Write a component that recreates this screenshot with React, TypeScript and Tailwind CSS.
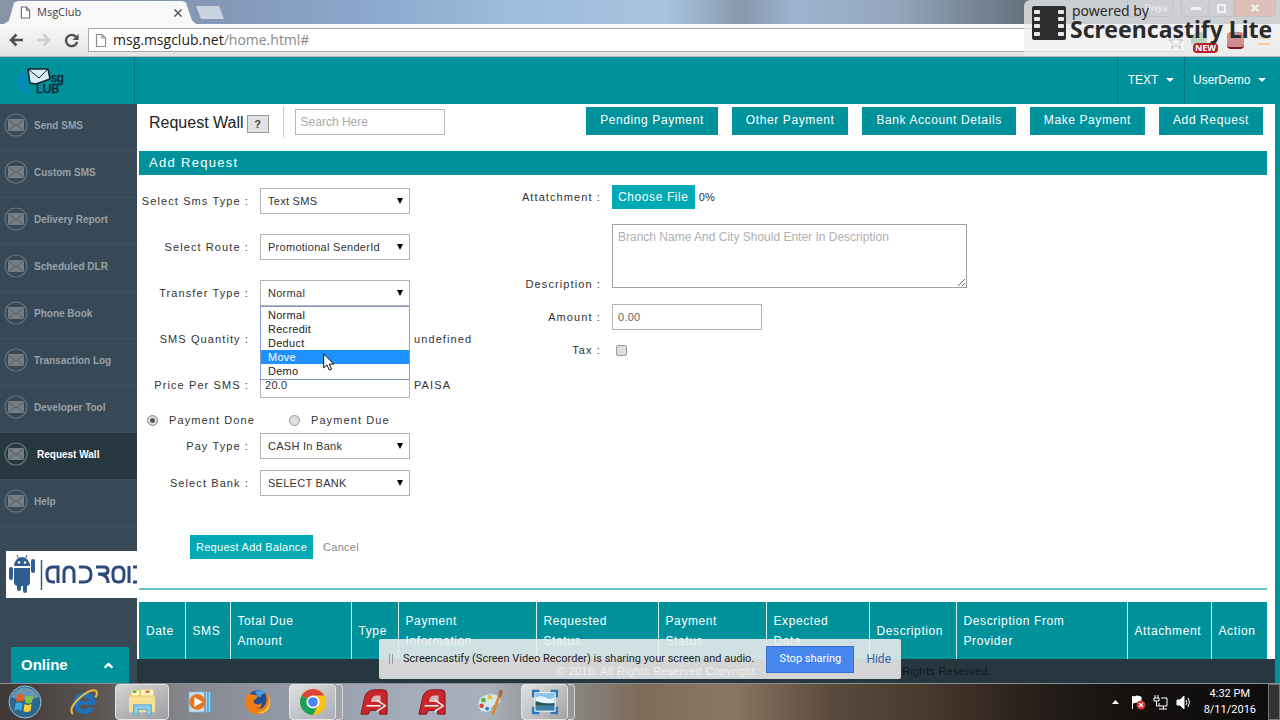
import { useState } from "react";
import type { ReactNode } from "react";
import { ChevronUp } from "lucide-react";

const MENU = [
  "Send SMS",
  "Custom SMS",
  "Delivery Report",
  "Scheduled DLR",
  "Phone Book",
  "Transaction Log",
  "Developer Tool",
  "Request Wall",
  "Help",
];

const ACTIONS = ["Pending Payment", "Other Payment", "Bank Account Details", "Make Payment", "Add Request"];

const TRANSFER_TYPES = ["Normal", "Recredit", "Deduct", "Move", "Demo"];

const COLUMNS = [
  { label: "Date", width: "w-[46px]" },
  { label: "SMS", width: "w-[45px]" },
  { label: "Total Due\nAmount", width: "w-[121px]" },
  { label: "Type", width: "w-[47px]" },
  { label: "Payment\nInformation", width: "w-[138px]" },
  { label: "Requested\nStatus", width: "w-[122px]" },
  { label: "Payment\nStatus", width: "w-[108px]" },
  { label: "Expected\nDate", width: "w-[103px]" },
  { label: "Description", width: "w-[87px]" },
  { label: "Description From\nProvider", width: "w-[171px]" },
  { label: "Attachment", width: "w-[84px]" },
  { label: "Action", width: "" },
];

function PageIcon({ className }: { className: string }) {
  return (
    <svg viewBox="0 0 12 14" className={className} fill="#fff" stroke="currentColor" strokeWidth="1.2">
      <path d="M1.5 1h5.5l3.5 3.5V13h-9z" />
      <path d="M7 1v3.5h3.5" fill="none" />
    </svg>
  );
}

function EnvelopeIcon() {
  return (
    <svg viewBox="0 0 24 24" className="h-6 w-6 shrink-0">
      <circle cx="12" cy="12" r="11" fill="none" stroke="#65717a" strokeWidth="1.2" />
      <rect x="4" y="6" width="16" height="12" rx="1" fill="#757e84" />
      <path d="M4.500 7l7.500 6 7.500-6M4.500 17.500l5.500-5M19.500 17.500l-5.500-5" fill="none" stroke="#4d5a64" strokeWidth="1" />
    </svg>
  );
}

function Logo() {
  return (
    <svg viewBox="0 0 52 32" className="h-8 w-[52px]">
      <path d="M12 4C4 7 0 15 3 21c2 5 7 7 15 8-7-4-10-8-9-14 0-4 1-8 3-11z" fill="#0b86d0" opacity=".6" />
      <path d="M12 4l20 0 2 10-14 5-6-1z" fill="#d9edf6" stroke="#16232b" strokeWidth="1.500" strokeLinejoin="round" />
      <path d="M12 4l11 9 9-9" fill="none" stroke="#16232b" strokeWidth="1" />
      <text x="35" y="17" fontFamily="Liberation Sans" fontSize="12" fill="#0d2730" stroke="#0d2730" strokeWidth=".5">sg</text>
      <text x="20" y="28" fontFamily="Liberation Sans" fontSize="12" fill="#0d2730" stroke="#0d2730" strokeWidth=".5">LUB</text>
    </svg>
  );
}

function TitleBar() {
  return (
    <div className="relative flex h-6 items-end bg-[linear-gradient(90deg,#8794a6_0%,#8499b8_18%,#8aa7cb_28%,#9dbbdc_40%,#a8c4e0_52%,#8898ad_58%,#9db3cf_62%,#93a6bc_70%,#65727e_80%,#707880_100%)] pl-1">
      <div className="flex h-[23px] w-48 items-center gap-[6px] bg-[#f8f8f9] pl-4 pr-3 [clip-path:polygon(0_100%,5px_85%,10px_8%,14px_0,178px_0,182px_8%,188px_85%,100%_100%)]">
        <PageIcon className="h-[13px] w-[11px] text-[#6c6c6c]" />
        <span className="flex-1 text-[11px] text-[#444]">MsgClub</span>
        <button aria-label="Close tab" className="mr-[2px]">
          <svg viewBox="0 0 8 8" className="h-2 w-2" stroke="#555" strokeWidth="1.500">
            <path d="M.5.5l7 7M7.500.5l-7 7" />
          </svg>
        </button>
      </div>
      <button
        aria-label="New tab"
        className="mb-[5px] h-[13px] w-7 bg-[#c9d3e0] [clip-path:polygon(0_0,82%_0,100%_100%,18%_100%)]"
      />
      <div className="ml-auto mr-1 flex h-[17px] self-start text-[9px] text-white">
        <button className="mr-2 w-[46px] rounded-b border border-t-0 border-[#444] pl-3">Divya</button>
        <button aria-label="Minimize" className="flex w-[29px] items-center justify-center rounded-bl border border-t-0 border-[#444]">
          <span className="h-[3px] w-[10px] bg-white" />
        </button>
        <button aria-label="Restore" className="flex w-[23px] items-center justify-center border-b border-[#444]">
          <span className="h-[9px] w-[9px] border-2 border-white" />
        </button>
        <button aria-label="Close" className="flex w-[43px] items-center justify-center rounded-br border border-t-0 border-[#444] bg-[#b03520]">
          <svg viewBox="0 0 8 8" className="h-2 w-2" stroke="#fff" strokeWidth="2">
            <path d="M.5.5l7 7M7.500.5l-7 7" />
          </svg>
        </button>
      </div>
    </div>
  );
}

function AddressBar() {
  return (
    <div className="flex h-[33px] items-center border-b border-[#b9b9bd] bg-linear-to-b from-[#fafafa] to-[#e4e3e6] pl-2">
      <button aria-label="Back" className="mr-3">
        <svg viewBox="0 0 16 14" className="h-[14px] w-4" fill="none" stroke="#505050" strokeWidth="2.500">
          <path d="M15 7H3M8.500 1.500L3 7l5.500 5.500" />
        </svg>
      </button>
      <button aria-label="Forward" className="mr-3">
        <svg viewBox="0 0 16 14" className="h-[14px] w-4" fill="none" stroke="#cfcfd1" strokeWidth="2.500">
          <path d="M1 7h12M7.500 1.500L13 7l-5.500 5.500" />
        </svg>
      </button>
      <button aria-label="Reload" className="mr-[9px]">
        <svg viewBox="0 0 16 16" className="h-[15px] w-[15px]">
          <path d="M12.800 4.200A6 6 0 1 0 14 9.500" fill="none" stroke="#505050" strokeWidth="2.500" />
          <path d="M15.500 1v6.500H9z" fill="#505050" />
        </svg>
      </button>
      <div className="mr-24 flex h-6 flex-1 items-center gap-[6px] border border-r-0 border-[#a9a9ad] bg-white pl-[6px]">
        <PageIcon className="h-[15px] w-3 shrink-0 text-[#8f8f8f]" />
        <span className="flex-1 text-sm leading-5 text-[#222]">
          msg.msgclub.net<span className="text-[#888]">/home.html#</span>
        </span>
        <svg viewBox="0 0 16 16" className="mt-1 h-4 w-4" fill="none" stroke="#444">
          <path d="M8 1l2 5h5l-4 3.500 1.500 5L8 11.500l-4.500 3 1.500-5L1 6h5z" />
        </svg>
      </div>
    </div>
  );
}

function Watermark() {
  return (
    <div className="absolute right-0 top-0 flex h-14 w-64 items-start gap-1 rounded-tl-md bg-[#eeeeee]/75 pl-2 pt-1 font-['Noto_Sans',sans-serif] text-[#2b2b2b]">
      <span className="absolute right-[73px] top-8 h-3 w-4 rounded-t-full bg-[#b5d3c2]" />
      <span className="absolute right-[62px] top-[43px] rounded-sm bg-[#b8202c] px-[2px] text-[9px] font-bold leading-[10px] text-white">
        NEW
      </span>
      <span className="absolute right-9 top-8 h-[17px] w-[17px] rounded-sm border-b-2 border-[#801018] bg-[#cf8c90]" />
      <span className="absolute right-[10px] top-[37px] h-2 w-3 border-y-2 border-[#ecd3b0]" />
      <svg viewBox="0 0 34 34" className="mt-[2px] h-[34px] w-[34px] shrink-0">
        <rect width="34" height="34" rx="2" fill="#2d2d2d" />
        {[4, 11, 18, 26].map((y) => (
          <g key={y} fill="#e8e8e8">
            <rect x="2" y={y} width="6" height="4" rx="1" />
            <rect x="26" y={y} width="6" height="4" rx="1" />
          </g>
        ))}
      </svg>
      <div className="relative whitespace-nowrap">
        <p className="pl-[2px] text-sm leading-[14px]">powered by</p>
        <p className="text-[23px] font-bold leading-[22px]">Screencastify Lite</p>
      </div>
    </div>
  );
}

function Caret() {
  return <span className="border-x-4 border-t-4 border-x-transparent border-t-white" />;
}

function AppHeader() {
  return (
    <header className="flex h-[47px] bg-[#00929b] text-xs text-white">
      <div className="w-[135px] border-r border-[#007880] pl-4 pt-2">
        <Logo />
      </div>
      <button className="ml-auto flex w-[67px] items-center justify-center gap-2 border-l border-[#007880] pb-[2px]">
        TEXT <Caret />
      </button>
      <button className="flex w-24 items-center gap-2 border-l border-[#007880] pb-[2px] pl-2">
        UserDemo <Caret />
      </button>
    </header>
  );
}

function Sidebar() {
  return (
    <aside className="flex w-[137px] shrink-0 flex-col overflow-hidden bg-[#374957]">
      <nav>
        {MENU.map((item) => (
          <a
            key={item}
            href="#"
            className={`flex h-[47px] items-center gap-[6px] border-b border-[#3f505e] pb-1 pl-1 text-[10px] font-bold ${
              item === "Request Wall" ? "bg-[#27373f] text-white" : "text-[#97a1a8]"
            }`}
          >
            <EnvelopeIcon />
            <span className={item === "Request Wall" ? "pl-[3px]" : ""}>{item}</span>
          </a>
        ))}
      </nav>
      <a href="#" aria-label="Android" className="ml-[6px] mt-6 block h-[47px] bg-white">
        <svg viewBox="0 0 131 47" className="h-[47px] w-[131px]">
          <g fill="#2f5f92">
            <path d="M8 15a8 9 0 0 1 16 0z" />
            <path d="M8 17h16v14q0 4-4 4h-8q-4 0-4-4z" />
            <rect x="3" y="16" width="4" height="13" rx="2" />
            <rect x="25" y="8" width="4" height="14" rx="2" />
            <rect x="11" y="33" width="4" height="7" rx="2" />
            <rect x="17" y="33" width="4" height="9" rx="2" />
            <path d="M11 4l2 5M21 4l-2 5" stroke="#2f5f92" strokeWidth="1" />
          </g>
          <circle cx="13" cy="11.5" r="1.2" fill="#fff" />
          <circle cx="19" cy="11.5" r="1.2" fill="#fff" />
          <path d="M35.500 9v30" stroke="#2a6280" strokeWidth="1.500" />
          <g fill="none" stroke="#2d4a78" strokeWidth="3">
            <path d="M52 32V16H47q-6 0-6 6v3q0 6 6 6h2" />
            <path d="M58 32V22q0-6 5-6t5 6v10" />
            <path d="M73 16h5q7 0 7 7v1q0 7-7 7h-5" />
            <path d="M90 16h8q4 0 4 3.500t-4 3.500h-6M92 23q10 0 10 9" />
            <path d="M112 16h1q5 0 5 6v3q0 6-5 6h-1q-5 0-5-6v-3q0-6 5-6z" />
            <path d="M123 15v17M127 16h8M127 31h8" />
          </g>
        </svg>
      </a>
      <button className="ml-[11px] mr-2 mt-auto flex h-9 items-center justify-between bg-[#00929b] pl-[10px] pr-[14px] text-[15px] font-bold text-white">
        Online
        <ChevronUp size={13} strokeWidth={4} />
      </button>
    </aside>
  );
}

function Select({ id, value }: { id: string; value: string }) {
  return (
    <div className="relative w-[150px]">
      <select
        id={id}
        className="block h-[26px] w-full appearance-none border border-[#b3b3b3] bg-white pl-[7px] text-[11px] tracking-wide text-[#333]"
      >
        <option>{value}</option>
      </select>
      <svg viewBox="0 0 6 6" className="pointer-events-none absolute right-[7px] top-[10px] h-[6px] w-[6px]">
        <path d="M0 0h6L3 6z" fill="#000" />
      </svg>
    </div>
  );
}

function Row({ id, label, children }: { id: string; label: string; children: ReactNode }) {
  return (
    <div className="flex h-[26px] items-center">
      <label htmlFor={id} className="w-[121px] shrink-0 whitespace-nowrap pr-[11px] text-right">
        {label} :
      </label>
      {children}
    </div>
  );
}

function TransferOptions({ value, onChange }: { value: string; onChange: (v: string) => void }) {
  return (
    <ul
      role="listbox"
      aria-label="Transfer Type"
      className="absolute left-0 top-[26px] z-10 w-[150px] border border-[#8a9bd0] bg-white py-px text-[11px] leading-[14px] tracking-wide text-[#222]"
    >
      {TRANSFER_TYPES.map((t) => (
        <li
          key={t}
          role="option"
          aria-selected={t === value}
          onClick={() => onChange(t)}
          className={`pl-[7px] ${t === "Move" ? "bg-[#1e90ff] text-white" : ""}`}
        >
          {t}
        </li>
      ))}
      <svg viewBox="0 0 12 18" className="absolute left-[62px] top-[46px] h-[18px] w-3">
        <path d="M.7.9v14l3.300-3 2.300 5.200 2.200-1-2.300-5h4.600z" fill="#fff" stroke="#111" />
      </svg>
    </ul>
  );
}

function PaymentRadio({ label, checked, onChange }: { label: string; checked: boolean; onChange: () => void }) {
  return (
    <label className="flex items-center gap-[11px]">
      <input
        type="radio"
        name="payment"
        checked={checked}
        onChange={onChange}
        className="h-[11px] w-[11px] appearance-none rounded-full border border-[#999] bg-[#dedede] checked:bg-[#555] checked:shadow-[inset_0_0_0_2px_#e8e8e8]"
      />
      {label}
    </label>
  );
}

function RequestForm() {
  const [transfer, setTransfer] = useState("Normal");
  const [payment, setPayment] = useState("done");

  return (
    <form className="flex border-b-2 border-[#5fc4c9] pb-[29px] text-[11px] tracking-widest text-[#333]">
      <div className="w-1/3 pt-[13px]">
        <div className="flex flex-col gap-5">
          <Row id="smsType" label="Select Sms Type">
            <Select id="smsType" value="Text SMS" />
          </Row>
          <Row id="route" label="Select Route">
            <Select id="route" value="Promotional SenderId" />
          </Row>
          <Row id="transfer" label="Transfer Type">
            <div className="relative">
              <Select id="transfer" value={transfer} />
              <TransferOptions value={transfer} onChange={setTransfer} />
            </div>
          </Row>
          <Row id="quantity" label="SMS Quantity">
            <input id="quantity" className="h-[26px] w-[150px] border border-[#b3b3b3] px-1" />
            <span className="pl-1">undefined</span>
          </Row>
          <Row id="price" label="Price Per SMS">
            <input
              id="price"
              defaultValue="20.0"
              className="h-[26px] w-[150px] border border-[#b3b3b3] px-1 tracking-wide"
            />
            <span className="pl-1">PAISA</span>
          </Row>
        </div>
        <div className="flex h-[35px] items-center gap-[34px] pl-2 pt-[10px]">
          <PaymentRadio label="Payment Done" checked={payment === "done"} onChange={() => setPayment("done")} />
          <PaymentRadio label="Payment Due" checked={payment === "due"} onChange={() => setPayment("due")} />
        </div>
        <div className="flex flex-col gap-[11px]">
          <Row id="payType" label="Pay Type">
            <Select id="payType" value="CASH In Bank" />
          </Row>
          <Row id="bank" label="Select Bank">
            <Select id="bank" value="SELECT BANK" />
          </Row>
        </div>
        <div className="mt-[39px] flex items-center gap-[10px] pl-[51px]">
          <button type="button" className="h-6 whitespace-nowrap bg-[#00a9b4] px-[6px] tracking-wide text-white">
            Request Add Balance
          </button>
          <button type="button" className="tracking-wide text-[#888]">Cancel</button>
        </div>
      </div>

      <div className="flex-1 pt-[10px]">
        <div className="flex h-6 items-center">
          <label htmlFor="attachment" className="w-[97px] pr-[11px] text-right">Attatchment :</label>
          <button type="button" id="attachment" className="h-6 bg-[#00a9b4] px-[6px] text-xs tracking-wider text-white">
            Choose File
          </button>
          <span className="pl-1 text-[11px] tracking-wide">0%</span>
        </div>
        <div className="mt-[15px] flex items-end">
          <label htmlFor="description" className="w-[97px] pr-[11px] text-right leading-2">Description :</label>
          <textarea
            id="description"
            placeholder="Branch Name And City Should Enter In Description"
            className="block h-16 w-[355px] border border-[#a0a0a0] px-[5px] py-1 text-xs tracking-normal placeholder:text-[#b0b0b0]"
          />
        </div>
        <div className="mt-4 flex h-[26px] items-center">
          <label htmlFor="amount" className="w-[97px] pr-[11px] text-right">Amount :</label>
          <input
            id="amount"
            defaultValue="0.00"
            className="h-[26px] w-[150px] border border-[#b3b3b3] px-[5px] tracking-wide text-[#666]"
          />
        </div>
        <div className="mt-[10px] flex h-5 items-center">
          <label htmlFor="tax" className="w-[97px] pr-[11px] text-right">Tax :</label>
          <input id="tax" type="checkbox" className="ml-1 h-[11px] w-[11px] appearance-none rounded-xs border border-[#999] bg-[#dedede]" />
        </div>
      </div>
    </form>
  );
}

function Main() {
  return (
    <main className="flex min-w-0 flex-1 flex-col border-r-5 border-[#00929b] bg-white">
      <div className="pl-[2px] pr-2">
        <div className="flex h-[47px] items-start pl-[10px] pr-1 pt-[3px]">
          <h1 className="mt-1 text-base leading-6 text-[#222]">Request Wall</h1>
          <button className="ml-[3px] mt-2 h-[18px] w-[22px] border border-[#999] bg-[#e2e2e2] text-[11px] font-bold leading-4 text-[#444]">
            ?
          </button>
          <div className="ml-[14px] h-[30px] border-l border-[#c8c8c8] pl-[11px] pt-[2px]">
            <input
              aria-label="Search"
              placeholder="Search Here"
              className="block h-[26px] w-[150px] border border-[#b8b8b8] px-[5px] text-xs placeholder:text-[#aaa]"
            />
          </div>
          <div className="ml-auto flex gap-[14px]">
            {ACTIONS.map((a) => (
              <button key={a} className="h-7 whitespace-nowrap bg-[#00929b] px-[14px] pb-[2px] text-xs tracking-wider text-white">
                {a}
              </button>
            ))}
          </div>
        </div>
        <h2 className="h-6 bg-[#00929b] pl-[10px] text-[13px] leading-6 tracking-widest text-white">Add Request</h2>
        <RequestForm />
        <table className="mt-3 w-full table-fixed border-collapse bg-[#00929b] text-left text-xs leading-5 tracking-wider text-white">
          <thead>
            <tr className="h-[57px]">
              {COLUMNS.map((c) => (
                <th
                  key={c.label}
                  className={`${c.width} whitespace-pre border-r border-[#d5f0f1] pl-[7px] font-normal last:border-r-0`}
                >
                  {c.label}
                </th>
              ))}
            </tr>
          </thead>
        </table>
      </div>
      <footer className="flex flex-1 items-center justify-between bg-[#27373f] pl-[420px] pr-[284px] text-[11px]">
        <span className="tracking-wide text-white">© 2016. All Rights Reserved Copyright. -</span>
        <span className="tracking-wide text-[#0e181d]">Rights Reserved.</span>
      </footer>
    </main>
  );
}

function SharingBar() {
  return (
    <div className="absolute bottom-[41px] left-1/2 z-20 flex h-10 w-[522px] -translate-x-1/2 items-center rounded-xs bg-[#ececec]/88 pl-[10px] font-['Roboto',sans-serif] text-[11px] text-[#222]">
      <span className="mr-[10px] h-[10px] w-1 border-x border-[#999]" />
      <span className="flex-1 whitespace-nowrap">
        Screencastify (Screen Video Recorder) is sharing your screen and audio.
      </span>
      <button className="h-[27px] w-[88px] border border-[#3a6fd0] bg-[#4787ed] text-white">Stop sharing</button>
      <a href="#" className="pl-3 pr-[10px] text-xs text-[#3b5fa8]">Hide</a>
    </div>
  );
}

function TaskButton({ label, active, stacked, children }: { label: string; active?: boolean; stacked?: boolean; children: ReactNode }) {
  return (
    <button aria-label={label} className="flex h-full w-[58px] justify-center px-[2px]">
      <span
        className={`flex h-full flex-1 items-center justify-center rounded-sm border ${
          active ? "border-[#e4e4e4] bg-linear-to-br from-[#f2f2f2]/80 to-[#b5b5b5]/60" : "border-transparent"
        }`}
      >
        <svg viewBox="0 0 30 30" className="h-7 w-7">{children}</svg>
      </span>
      {stacked && <span className="h-full w-[7px] rounded-r-sm border border-l-0 border-[#d5d5d5] bg-[#aaa]/50" />}
    </button>
  );
}

function RedA() {
  return (
    <>
      <path d="M1 28L5 10q2-8 11-8h9q4 0 4 4v22h-8v-4h-10l-2 4z" fill="#c9252b" stroke="#7f1418" />
      <path d="M12 13q1-5 6-5h4v7h-10z" fill="#d8b4b6" />
      <path d="M7 19h15M18 13l9 6-9 6" fill="none" stroke="#fff" strokeWidth="1.500" />
    </>
  );
}

function Taskbar() {
  return (
    <div className="flex h-[37px] items-center border-t border-[#8b8f92] bg-[linear-gradient(90deg,#3d3836_0%,#5c5654_8%,#85868c_14%,#9298a6_22%,#a4acba_32%,#a9b0bb_38%,#8a8a88_44%,#7d6b58_50%,#8a7763_57%,#5a4a3d_65%,#4a3a2e_72%,#2a211c_80%,#14110f_88%,#0e0d0d_100%)]">
      <button aria-label="Start" className="w-[55px] pl-2">
        <svg viewBox="0 0 34 34" className="h-[34px] w-[34px]">
          <circle cx="17" cy="17" r="16" fill="#2d678f" stroke="#9fc0d2" />
          <path d="M3 12a15 15 0 0 1 28 0q-14 6-28 0z" fill="#8db7cf" opacity=".6" />
          <path d="M9 10q4-2 7 0l-1 7q-4-2-7 0z" fill="#ea5b23" />
          <path d="M18 10.500q3 2 7 0l-1 7q-4 2-7 0z" fill="#86c440" />
          <path d="M7.500 18.500q4-2 7 0l-1 7q-4-2-7 0z" fill="#3ba7e4" />
          <path d="M16.500 19q3 2 7 0l-1 7q-4 2-7 0z" fill="#fcd034" />
        </svg>
      </button>
      <TaskButton label="Internet Explorer">
        <path fillRule="evenodd" d="M21 18H10q1 5 6 5 3 0 4-2h6q-3 7-10 7-12-1-12-12T16 5q11 0 11 13zM10.500 14h10q-1-4-5-4t-5 4z" fill="#1f72c0" />
        <path d="M3 28q-5-6 7-17T28 3q2 3-1 7" fill="none" stroke="#e9b93a" strokeWidth="2.200" />
      </TaskButton>
      <TaskButton label="Explorer" active>
        <path d="M2 6l8-4h18v22H2z" fill="#e6c862" />
        <path d="M4 3h8v5H4zM14 2h13v6H14z" fill="#fff4b8" />
        <path d="M5 3h4v2H5z" fill="#39a93f" />
        <path d="M19 3h4v2h-4z" fill="#d04a36" />
        <path d="M1 9h28v17H1z" fill="#f5e193" />
        <path d="M6 29V18h19v11h-5v-6h-9v6z" fill="#8fcbe6" stroke="#5aa5cc" />
      </TaskButton>
      <TaskButton label="Media Player">
        <path d="M8 4h19v22H8z" fill="#58a8d2" />
        <path d="M22 4v22M25 4v22" stroke="#b9dcec" />
        <path d="M3 4h17v22H3z" fill="#c5dfec" stroke="#6f9bb5" />
        <circle cx="12" cy="15" r="8.500" fill="#e8761e" />
        <path d="M9 10l9 5-9 5z" fill="#fff" />
      </TaskButton>
      <TaskButton label="Firefox">
        <circle cx="15" cy="15" r="12.500" fill="#254f93" />
        <path d="M12 4q6-3 12 1-6 1-6 5-5-1-6-6z" fill="#4b9bd8" />
        <path d="M4 5q2 2 5 2 4 0 6 2l-4 4q-2 1 1 4 3 2 7-1 0 6-6 6 9 2 11-8 1-5-2-10 6 4 6 12-1 12-13 12T1.500 17Q1 10 4 5z" fill="#ee7d16" />
        <path d="M25 6q3 5 1 12-3 8-12 8 8 4 13-5 3-9-2-15z" fill="#f9c638" />
      </TaskButton>
      <TaskButton label="Chrome" active stacked>
        <circle cx="15" cy="15" r="14" fill="#fbc116" />
        <path d="M15 15L2.900 8A14 14 0 0 1 27.100 8H15z" fill="#dc4437" />
        <path d="M2.900 8A14 14 0 0 0 15 29l5.500-11-5.500-3z" fill="#1a9e5c" />
        <circle cx="15" cy="15" r="7" fill="#fff" />
        <circle cx="15" cy="15" r="5.200" fill="#4886ed" />
      </TaskButton>
      <TaskButton label="Reader"><RedA /></TaskButton>
      <TaskButton label="Writer"><RedA /></TaskButton>
      <TaskButton label="Paint">
        <path d="M16 6Q3 7 2 17q0 10 10 9 5-1 5-5 1-3 5-3 6-2 4-7-3-5-10-5z" fill="#d4e6ee" stroke="#8eb4c6" />
        <circle cx="8" cy="13" r="2.500" fill="#65ae3c" />
        <circle cx="15" cy="10" r="2.500" fill="#f0be32" />
        <circle cx="6" cy="19" r="2.500" fill="#dc4c3c" />
        <circle cx="12" cy="22" r="2" fill="#3c74c4" />
        <path d="M18 28L25 8" stroke="#db8a32" strokeWidth="3" />
        <path d="M24 9l1-7 4 1-2 7z" fill="#a66a35" />
      </TaskButton>
      <TaskButton label="Photo Viewer" active stacked>
        <path d="M1 2h8v4H5v4H1zM29 2h-8v4h4v4h4zM1 28h8v-4H5v-4H1zM29 28h-8v-4h4v-4h4z" fill="#2d78ba" />
        <path d="M4 5h22v20H4z" fill="#8bc3e8" stroke="#e5f0f7" />
        <path d="M5 10q7-3 12 1 5 2 8-1v6H5z" fill="#e5f3fa" />
        <path d="M5 14q9 4 20 2v3H5z" fill="#29564c" />
        <path d="M5 19h20v5H5z" fill="#407fa4" />
      </TaskButton>
      <div className="ml-auto flex h-full items-center text-white">
        <svg viewBox="0 0 78 20" className="h-5 w-[78px]" fill="none" stroke="#fff">
          <path d="M0 12l3.500-4L7 12z" fill="#fff" stroke="none" />
          <path d="M20.500 4v13" />
          <path d="M21 5q4-2 8 0v6q-4-2-8 0z" fill="#fff" />
          <circle cx="29" cy="13" r="4.500" fill="#d72f2f" stroke="none" />
          <path d="M27 11l4 4M31 11l-4 4" strokeWidth="1.200" />
          <path d="M49 6h6v8h-8v-3M47 17h8M51.500 14v3M43 3v3M46 3v3M42 6h5v3h-5zM44.500 9v5h2" />
          <path d="M65 8h3l4-4v13l-4-4h-3z" fill="#fff" />
          <path d="M74 8q2 3 0 5M76 6q3 4 0 9" />
        </svg>
        <div className="pl-[14px] pr-3 text-center text-[11px] leading-4">
          <p>4:32 PM</p>
          <p>8/11/2016</p>
        </div>
        <button aria-label="Show desktop" className="h-full w-3 border border-[#777] bg-[#333]" />
      </div>
    </div>
  );
}

export default function App() {
  return (
    <div className="relative flex min-h-screen flex-col overflow-hidden bg-white font-['Liberation_Sans',Arial,sans-serif]">
      <div className="relative font-['Open_Sans',sans-serif]">
        <TitleBar />
        <AddressBar />
        <Watermark />
      </div>
      <AppHeader />
      <div className="flex flex-1">
        <Sidebar />
        <Main />
      </div>
      <SharingBar />
      <div className="font-['Roboto',sans-serif]">
        <Taskbar />
      </div>
    </div>
  );
}
